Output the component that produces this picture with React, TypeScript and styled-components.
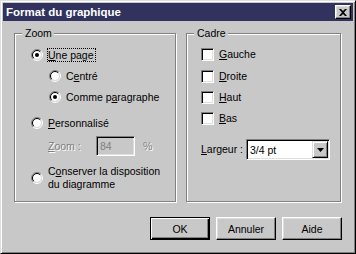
import React from "react";
import styled, { createGlobalStyle } from "styled-components";

const Global = createGlobalStyle`
  html, body { margin: 0; padding: 0; background: #c8c8c8; }
  body { font-family: "Liberation Sans", Arial, sans-serif; font-size: 10.5px; color: #000; }
`;

const Window = styled.div`
  width: 356px;
  height: 254px;
  box-sizing: border-box;
  background: #c8c8c8;
  border: 1px solid;
  border-color: #dfdfdf #000 #000 #dfdfdf;
  box-shadow: inset 1px 1px 0 #fff, inset -1px -1px 0 #808080;
  padding: 2px;
  display: flex;
  flex-direction: column;
`;

const TitleBar = styled.div`
  height: 18px;
  background: #32325f;
  display: flex;
  align-items: center;
  justify-content: space-between;
  padding: 0 2px 0 3px;
`;

const Title = styled.span`
  color: #fff;
  font-weight: bold;
  font-size: 11.5px;
`;

const CloseBtn = styled.div`
  width: 16px;
  height: 14px;
  box-sizing: border-box;
  background: #c8c8c8;
  border: 1px solid;
  border-color: #fff #000 #000 #fff;
  box-shadow: inset -1px -1px 0 #808080, inset 1px 1px 0 #dfdfdf;
  display: flex;
  align-items: center;
  justify-content: center;
`;

const Body = styled.div`
  flex: 1;
  display: flex;
  flex-direction: column;
  padding: 12px 11px 0 11px;
`;

const Groups = styled.div`
  display: flex;
  gap: 10px;
`;

const Group = styled.div<{ $w: number }>`
  position: relative;
  width: ${(p) => p.$w}px;
  height: 169px;
  box-sizing: border-box;
  border: 1px solid #808080;
  box-shadow: inset 1px 1px 0 #fff, 1px 1px 0 #fff;
  display: flex;
  flex-direction: column;
`;

const Caption = styled.span`
  position: absolute;
  top: -7px;
  left: 7px;
  padding: 0 2px 0 3px;
  background: #c8c8c8;
  line-height: 13px;
`;

const Row = styled.div<{ $mt: number; $indent: number; $h?: number }>`
  display: flex;
  align-items: center;
  margin-top: ${(p) => p.$mt}px;
  padding-left: ${(p) => p.$indent}px;
  height: ${(p) => p.$h ?? 16}px;
`;

const RadioIcon = styled.svg`
  width: 12px;
  height: 12px;
  flex: none;
  margin-right: 5px;
`;

const Label = styled.span`
  line-height: 13px;
  white-space: nowrap;
`;

const Focus = styled.span`
  border: 1px dotted #000;
  padding: 0 1px 0 0;
  margin-left: -1px;
  line-height: 12px;
`;

const Disabled = styled.span`
  color: #808080;
  text-shadow: 1px 1px 0 #fff;
`;

const Sunken = styled.div<{ $w: number; $h: number; $bg: string }>`
  width: ${(p) => p.$w}px;
  height: ${(p) => p.$h}px;
  box-sizing: border-box;
  background: ${(p) => p.$bg};
  border: 1px solid;
  border-color: #808080 #fff #fff #808080;
  box-shadow: inset 1px 1px 0 #000, inset -1px -1px 0 #dfdfdf;
  display: flex;
  align-items: center;
`;

const FieldText = styled.span<{ $disabled?: boolean }>`
  flex: 1;
  padding-left: 3px;
  color: ${(p) => (p.$disabled ? "#808080" : "#000")};
`;

const Check = styled.div`
  width: 13px;
  height: 13px;
  flex: none;
  box-sizing: border-box;
  background: #fff;
  border: 1px solid;
  border-color: #808080 #fff #fff #808080;
  box-shadow: inset 1px 1px 0 #000, inset -1px -1px 0 #dfdfdf;
  margin-right: 5px;
`;

const DropBtn = styled.div`
  width: 16px;
  height: 17px;
  box-sizing: border-box;
  margin-right: 1px;
  background: #c8c8c8;
  border: 1px solid;
  border-color: #dfdfdf #000 #000 #dfdfdf;
  box-shadow: inset 1px 1px 0 #fff, inset -1px -1px 0 #808080;
  display: flex;
  align-items: center;
  justify-content: center;
`;

const Buttons = styled.div`
  display: flex;
  justify-content: flex-end;
  gap: 6px;
  margin-top: 15px;
`;

const Button = styled.div<{ $default?: boolean }>`
  width: 60px;
  height: 23px;
  box-sizing: border-box;
  display: flex;
  align-items: center;
  justify-content: center;
  border: 1px solid;
  border-color: ${(p) => (p.$default ? "#000" : "#fff #000 #000 #fff")};
  box-shadow: ${(p) =>
    p.$default
      ? "inset 1px 1px 0 #fff, inset -1px -1px 0 #000, inset -2px -2px 0 #808080"
      : "inset -1px -1px 0 #808080, inset 1px 1px 0 #dfdfdf"};
`;

const U = styled.span`
  text-decoration: underline;
  text-underline-offset: 1px;
`;

const Radio = ({ checked }: { checked?: boolean }) => (
  <RadioIcon viewBox="0 0 12 12">
    <path d="M2.1 9.9 A5.5 5.5 0 0 1 9.9 2.1" fill="none" stroke="#808080" />
    <path d="M9.9 2.1 A5.5 5.5 0 0 1 2.1 9.9" fill="none" stroke="#fff" />
    <circle cx="6" cy="6" r="4" fill="#fff" />
    <path d="M2.8 9.2 A4.5 4.5 0 0 1 9.2 2.8" fill="none" stroke="#000" />
    <path d="M9.2 2.8 A4.5 4.5 0 0 1 2.8 9.2" fill="none" stroke="#dfdfdf" />
    {checked && <circle cx="6" cy="6" r="2" fill="#000" />}
  </RadioIcon>
);

export default function App() {
  return (
    <>
      <Global />
      <Window>
        <TitleBar>
          <Title>Format du graphique</Title>
          <CloseBtn>
            <svg width="8" height="7" viewBox="0 0 8 7">
              <path d="M0 0h2l2 2 2-2h2L5 3.5 8 7H6L4 5 2 7H0l3-3.5z" fill="#000" />
            </svg>
          </CloseBtn>
        </TitleBar>
        <Body>
          <Groups>
            <Group $w={162}>
              <Caption>Zoom</Caption>
              <Row $mt={13} $indent={16}>
                <Radio checked />
                <Focus>
                  <U>U</U>ne page
                </Focus>
              </Row>
              <Row $mt={5} $indent={34}>
                <Radio />
                <Label>
                  C<U>e</U>ntré
                </Label>
              </Row>
              <Row $mt={5} $indent={34}>
                <Radio checked />
                <Label>
                  Comme p<U>a</U>ragraphe
                </Label>
              </Row>
              <Row $mt={10} $indent={16}>
                <Radio />
                <Label>
                  <U>P</U>ersonnalisé
                </Label>
              </Row>
              <Row $mt={5} $indent={33} $h={20}>
                <Disabled style={{ width: 48 }}>
                  <U>Z</U>oom :
                </Disabled>
                <Sunken $w={39} $h={20} $bg="#c8c8c8">
                  <FieldText $disabled>84</FieldText>
                </Sunken>
                <Disabled style={{ marginLeft: 8 }}>%</Disabled>
              </Row>
              <Row $mt={9} $indent={16} $h={26}>
                <Radio />
                <Label>
                  C<U>o</U>nserver la disposition
                  <br />
                  du diagramme
                </Label>
              </Row>
            </Group>
            <Group $w={155}>
              <Caption>Cadre</Caption>
              <Row $mt={12} $indent={14}>
                <Check />
                <Label>
                  <U>G</U>auche
                </Label>
              </Row>
              <Row $mt={6} $indent={14}>
                <Check />
                <Label>
                  <U>D</U>roite
                </Label>
              </Row>
              <Row $mt={5} $indent={14}>
                <Check />
                <Label>
                  <U>H</U>aut
                </Label>
              </Row>
              <Row $mt={5} $indent={14}>
                <Check />
                <Label>
                  <U>B</U>as
                </Label>
              </Row>
              <Row $mt={13} $indent={14} $h={21}>
                <Label style={{ width: 45 }}>
                  <U>L</U>argeur :
                </Label>
                <Sunken $w={84} $h={21} $bg="#fff">
                  <FieldText>3/4 pt</FieldText>
                  <DropBtn>
                    <svg width="7" height="4" viewBox="0 0 7 4">
                      <path d="M0 0h7L3.5 4z" fill="#000" />
                    </svg>
                  </DropBtn>
                </Sunken>
              </Row>
            </Group>
          </Groups>
          <Buttons>
            <Button $default>OK</Button>
            <Button>Annuler</Button>
            <Button>Aide</Button>
          </Buttons>
        </Body>
      </Window>
    </>
  );
}
